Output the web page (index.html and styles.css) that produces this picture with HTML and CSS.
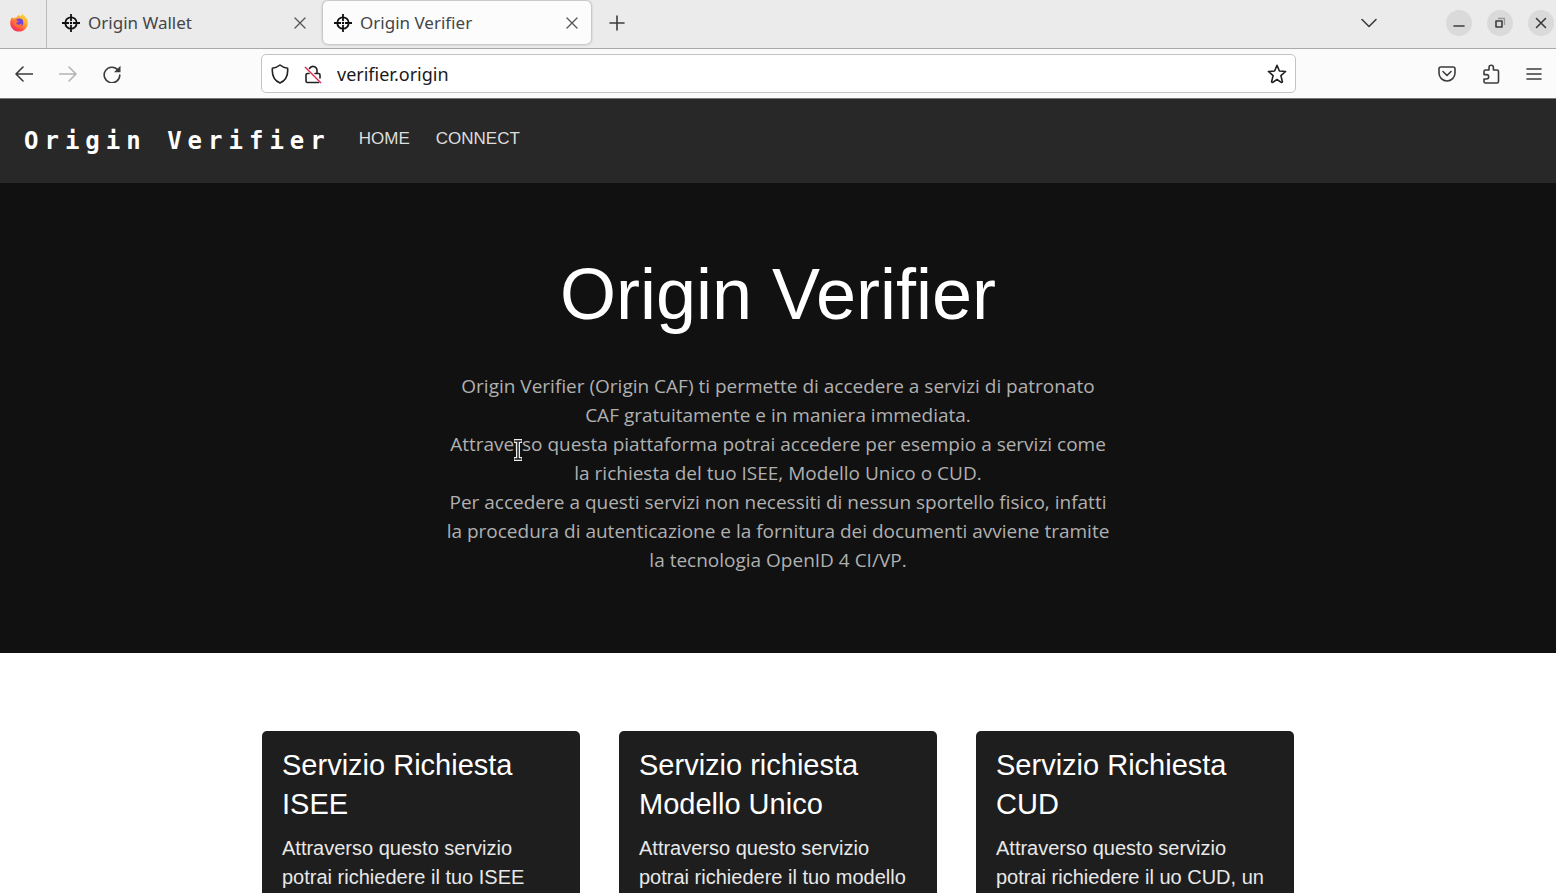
FILE: index.html
```html
<!DOCTYPE html>
<html lang="it">
<head>
<meta charset="utf-8">
<meta name="viewport" content="width=device-width, initial-scale=1">
<title>Origin Verifier</title>
<link rel="stylesheet" href="styles.css">
</head>
<body>
<div class="browser">
  <div class="tabbar">
    <div class="firefox-view">
      <button class="icon-button" aria-label="Firefox View">
        <svg width="20" height="20" viewBox="0 0 20 20">
          <defs>
            <linearGradient id="flame" x1="0.85" y1="0" x2="0.2" y2="1"><stop offset="0" stop-color="#ffe14a"/><stop offset="0.45" stop-color="#ff9a2e"/><stop offset="0.75" stop-color="#ff4a46"/><stop offset="1" stop-color="#e8286e"/></linearGradient>
          </defs>
          <path d="M3 4.2 4.4 5.6C5.4 4.8 6.500 4.600 7.400 4.600 8 3.400 9 2.500 10.200 1.800 10.300 2.600 10.700 3.200 11.400 3.500L13.300.800C14.200 2 15.400 2.600 16.400 3.800 18.200 5.800 19 7.800 18.800 10.300 18.500 15.200 14.800 18.600 10 18.600 5 18.600 1.200 14.800 1.200 10 1.200 7.700 1.800 5.800 3 4.200z" fill="url(#flame)"/>
          <circle cx="10.300" cy="9.600" r="4" fill="#7543d8"/>
          <path d="M4 7.500C6 6.700 8 7 9.800 8.300 9.200 9.300 7.800 9.200 7.300 10.200 8.300 12.200 11.500 12 13 10.200 13.300 13.300 10.800 15 8.400 14.400 5.500 13.800 4 10.700 4 7.500z" fill="#ff7138"/>
        </svg>
      </button>
    </div>
    <div class="tab">
      <svg class="tab-icon" width="18" height="18" viewBox="0 0 18 18"><g fill="none" stroke="#111" stroke-width="1.800"><circle cx="9" cy="9" r="5.700"/><path d="M9 0v7M9 11v7M0 9h7M11 9h7"/></g><circle cx="9" cy="9" r="1.200"/></svg>
      <span class="tab-title">Origin Wallet</span>
      <button class="icon-button" aria-label="Chiudi scheda"><svg width="12" height="12" viewBox="0 0 12 12"><path class="line" d="M1 1l10 10M11 1 1 11"/></svg></button>
    </div>
    <div class="tab tab-active">
      <svg class="tab-icon" width="18" height="18" viewBox="0 0 18 18"><g fill="none" stroke="#111" stroke-width="1.800"><circle cx="9" cy="9" r="5.700"/><path d="M9 0v7M9 11v7M0 9h7M11 9h7"/></g><circle cx="9" cy="9" r="1.200"/></svg>
      <span class="tab-title">Origin Verifier</span>
      <button class="icon-button" aria-label="Chiudi scheda"><svg width="12" height="12" viewBox="0 0 12 12"><path class="line" d="M1 1l10 10M11 1 1 11"/></svg></button>
    </div>
    <button class="icon-button new-tab" aria-label="Nuova scheda"><svg width="16" height="16" viewBox="0 0 16 16"><path class="line bold" d="M8 1v14M1 8h14"/></svg></button>
    <div class="window-tools">
      <button class="icon-button" aria-label="Elenca schede"><svg width="16" height="10" viewBox="0 0 16 10"><path class="line bold" d="M1 1.500l7 7 7-7"/></svg></button>
      <div class="window-buttons">
        <button class="window-button" aria-label="Riduci"><svg width="12" height="12" viewBox="0 0 12 12"><path class="line bold" d="M1 9h10"/></svg></button>
        <button class="window-button" aria-label="Ripristina"><svg width="12" height="12" viewBox="0 0 12 12"><path d="M4 1.500h6.500V8" fill="none" stroke="#999" stroke-width="1.300"/><path class="line bold" d="M2 4h6v6H2z"/></svg></button>
        <button class="window-button" aria-label="Chiudi"><svg width="12" height="12" viewBox="0 0 12 12"><path class="line bold" d="M1.500 1.500l9 9M10.500 1.500l-9 9"/></svg></button>
      </div>
    </div>
  </div>

  <div class="toolbar">
    <div class="nav-tools">
      <button class="icon-button" aria-label="Indietro"><svg width="18" height="16" viewBox="0 0 18 16"><path class="line bold" d="M17.500 8H1M8 1 1 8l7 7"/></svg></button>
      <button class="icon-button" aria-label="Avanti" disabled><svg width="18" height="16" viewBox="0 0 18 16"><path class="line faint" d="M.500 8H17M10 1l7 7-7 7"/></svg></button>
      <button class="icon-button" aria-label="Ricarica"><svg width="18" height="18" viewBox="0 0 18 18"><path class="line bold" d="M15 5A7.800 7.800 0 1 0 16.800 10"/><path d="M17.500.700v6.500H11z" fill="#3c3c3e"/></svg></button>
    </div>
    <div class="urlbar">
      <svg width="18" height="20" viewBox="0 0 18 20"><path class="line dark" d="M9 1C7 2.700 4.500 3.800 1.400 4.200.800 10.500 3.200 16.500 9 19 14.800 16.500 17.200 10.500 16.600 4.200 13.500 3.800 11 2.700 9 1z"/></svg>
      <svg width="18" height="20" viewBox="0 0 18 20"><path class="line dark" d="M5.500 4.500a4 4 0 0 1 7.500 1.500V9M11 9.500h3.500q1.500 0 1.500 1.500v3M5 9.500H3.500Q2 9.500 2 11v6q0 1.500 1.500 1.500h11"/><path d="M1 3l16 16" stroke="#e22850" stroke-width="1.500"/></svg>
      <input class="url-input" type="text" aria-label="Indirizzo" value="verifier.origin">
      <button class="icon-button" aria-label="Aggiungi ai segnalibri"><svg width="20" height="20" viewBox="0 0 20 20"><path class="line dark" d="M10 1.300 12.400 7l6.200.500-4.700 4.100 1.500 6.200q-.300.900-1.200.500L10 15.500l-4.200 2.800q-.900.400-1.200-.5l1.500-6.200L1.400 7.500 7.600 7z"/></svg></button>
    </div>
    <div class="menu-tools">
      <button class="icon-button" aria-label="Salva in Pocket"><svg width="18" height="18" viewBox="0 0 18 18"><path class="line bold" d="M2.800 2h12.400q1.800 0 1.800 1.800V8a8 8 0 0 1-16 0V3.800Q1 2 2.800 2z"/><path class="line bold" d="M5 6.500l4 4 4-4"/></svg></button>
      <button class="icon-button" aria-label="Estensioni"><svg width="18" height="20" viewBox="0 0 18 20"><path class="line bold" d="M2 9V7.500Q2 6 3.500 6H7V3.500a2.200 2.200 0 0 1 4.400 0V6H15q1.500 0 1.500 1.500v10Q16.500 19 15 19H3.500Q2 19 2 17.500V15h2.500a2.200 2.200 0 0 0 0-4.400H2z"/></svg></button>
      <button class="icon-button" aria-label="Menu"><svg width="16" height="14" viewBox="0 0 16 14"><path class="line bold" d="M1 2h14M1 7h14M1 12h14"/></svg></button>
    </div>
  </div>

  <div class="page">
    <header class="navbar">
      <a class="brand" href="#">Origin Verifier</a>
      <nav class="nav-links">
        <a href="#">HOME</a>
        <a href="#">CONNECT</a>
      </nav>
    </header>
    <main>
      <section class="hero">
        <h1 class="hero-title">Origin Verifier</h1>
        <p class="hero-text">Origin Verifier (Origin CAF) ti permette di accedere a servizi di patronato<br>CAF gratuitamente e in maniera immediata.<br>Attraverso questa piattaforma potrai accedere per esempio a servizi come<br>la richiesta del tuo ISEE, Modello Unico o CUD.<br>Per accedere a questi servizi non necessiti di nessun sportello fisico, infatti<br>la procedura di autenticazione e la fornitura dei documenti avviene tramite<br>la tecnologia OpenID 4 CI/VP.</p>
        <svg class="pointer" width="10" height="22" viewBox="0 0 10 22"><path d="M1 2h8M1 20h8M5 2v18" fill="none" stroke="#eee" stroke-width="4"/><path d="M1.500 2h7M1.500 20h7M5 2v18" fill="none" stroke="#111" stroke-width="1.400"/></svg>
      </section>
      <section class="cards">
        <article class="card">
          <h2 class="card-title">Servizio Richiesta ISEE</h2>
          <p class="card-text">Attraverso questo servizio<br>potrai richiedere il tuo ISEE</p>
        </article>
        <article class="card">
          <h2 class="card-title">Servizio richiesta Modello Unico</h2>
          <p class="card-text">Attraverso questo servizio<br>potrai richiedere il tuo modello</p>
        </article>
        <article class="card">
          <h2 class="card-title">Servizio Richiesta CUD</h2>
          <p class="card-text">Attraverso questo servizio<br>potrai richiedere il uo CUD, un</p>
        </article>
      </section>
    </main>
  </div>
</div>
</body>
</html>
```
FILE: styles.css
```css
* {
  box-sizing: border-box;
}

body {
  margin: 0;
  background: #fff;
  font-family: "Liberation Sans", Arial, sans-serif;
}

h1, h2, p {
  margin: 0;
  font-weight: 400;
}

a {
  text-decoration: none;
}

svg {
  display: block;
  flex: none;
}

button {
  border: 0;
  padding: 0;
  background: none;
}

.browser {
  display: flex;
  flex-direction: column;
  height: 100vh;
  overflow: hidden;
}

.line {
  fill: none;
  stroke: #555;
  stroke-width: 1.3;
  stroke-linecap: round;
  stroke-linejoin: round;
}

.bold {
  stroke: #3c3c3e;
  stroke-width: 1.6;
}

.dark {
  stroke: #222;
  stroke-width: 1.6;
}

.faint {
  stroke: #b4b4b6;
  stroke-width: 1.6;
}

.icon-button {
  display: flex;
  flex: none;
  align-items: center;
  justify-content: center;
}

/* Tab strip */
.tabbar {
  display: flex;
  flex: none;
  height: 49px;
  background: #ebebeb;
  border-bottom: 1px solid #a9a9a9;
}

.firefox-view {
  display: flex;
  align-items: center;
  justify-content: center;
  width: 47px;
  padding: 0 9px 2px 0;
  border-right: 1px solid #bbb;
}

.tab {
  display: flex;
  align-items: center;
  width: 268px;
  height: 43px;
  margin: 1px 4px 0;
  padding: 0 13px 0 11px;
  border-radius: 5px;
}

.tab + .tab {
  margin-left: 0;
}

.tab-active {
  background: #fcfcfd;
  box-shadow: 0 0 3px rgba(0, 0, 0, 0.4);
}

.tab-icon {
  margin-right: 8px;
}

.tab-title {
  flex: 1;
  font-family: "Noto Sans", "Open Sans", sans-serif;
  font-size: 17px;
  color: #454547;
}

.new-tab {
  height: 45px;
  margin-left: 14px;
}

.window-tools {
  display: flex;
  align-items: center;
  height: 45px;
  gap: 69px;
  margin-left: auto;
  padding-right: 2px;
}

.window-buttons {
  display: flex;
  gap: 15px;
}

.window-button {
  display: flex;
  align-items: center;
  justify-content: center;
  width: 26px;
  height: 26px;
  border-radius: 50%;
  background: #dadada;
}

/* Address toolbar */
.toolbar {
  display: flex;
  flex: none;
  align-items: center;
  height: 50px;
  background: #fbfbfb;
  border-bottom: 1px solid #77777a;
}

.nav-tools,
.menu-tools {
  display: flex;
  flex: 1;
  align-items: center;
  gap: 26px;
}

.nav-tools {
  padding-left: 15px;
}

.menu-tools {
  justify-content: flex-end;
  padding-right: 14px;
}

.urlbar {
  display: flex;
  flex: 0 1 1035px;
  align-items: center;
  gap: 15px;
  height: 39px;
  padding: 0 8px 0 9px;
  border: 1px solid #c3c3c4;
  border-radius: 5px;
  background: #fff;
}

.url-input {
  flex: 1;
  min-width: 0;
  padding: 0;
  border: 0;
  outline: 0;
  background: none;
  font-family: "Noto Sans", "Open Sans", sans-serif;
  font-size: 18px;
  color: #1a1a1a;
}

/* Site */
.page {
  flex: 1;
  min-height: 0;
  overflow: hidden;
}

.navbar {
  display: flex;
  align-items: center;
  gap: 28px;
  height: 84px;
  padding: 0 24px;
  background: #282828;
}

.brand {
  font-family: "DejaVu Sans Mono", monospace;
  font-size: 24px;
  font-weight: 700;
  letter-spacing: 6px;
  color: #fff;
}

.nav-links {
  display: flex;
  gap: 26px;
  padding-bottom: 4px;
}

.nav-links a {
  font-size: 17px;
  color: #dedede;
}

.hero {
  position: relative;
  padding: 68px 24px 78px;
  background: #111;
  text-align: center;
}

.hero-title {
  font-size: 72px;
  line-height: 86px;
  color: #fff;
}

.hero-text {
  margin-top: 35px;
  font-family: "Open Sans", "Noto Sans", sans-serif;
  font-size: 19px;
  line-height: 29px;
  color: #b0b0b0;
}

.pointer {
  position: absolute;
  top: 256px;
  left: calc(50% - 265px);
}

.cards {
  display: grid;
  grid-template-columns: repeat(3, 1fr);
  gap: 39px;
  max-width: 1032px;
  margin: 78px auto;
}

.card {
  min-width: 0;
  padding: 15px 20px 80px;
  border-radius: 5px;
  background: #1e1e1e;
}

.card-title {
  font-size: 29px;
  line-height: 39px;
  color: #fff;
}

.card-text {
  margin-top: 10px;
  font-size: 20px;
  line-height: 29px;
  color: #e8e8e8;
}
```
